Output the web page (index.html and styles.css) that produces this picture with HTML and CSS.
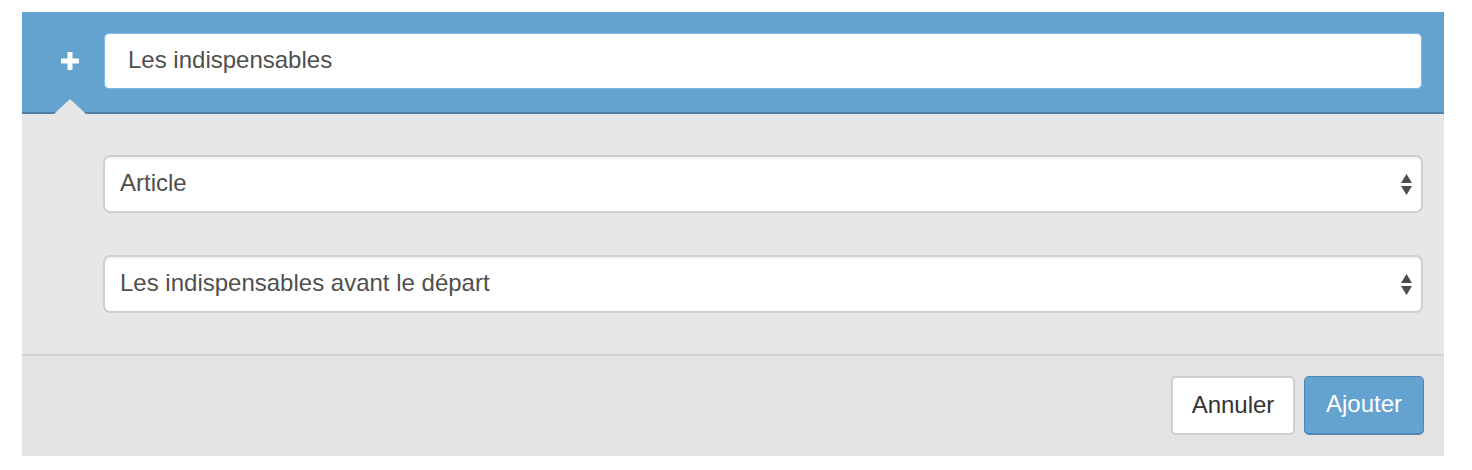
FILE: index.html
```html
<!DOCTYPE html>
<html lang="fr">
<head>
  <meta charset="UTF-8">
  <meta name="viewport" content="width=device-width, initial-scale=1.0">
  <title>Ajouter un lien</title>
  <link rel="stylesheet" href="styles.css">
</head>
<body>
  <main class="panel">
    <div class="panel-head">
      <div class="icon">
        <svg width="18" height="18" viewBox="0 0 18 18">
          <rect x="6.5" y="0" width="5" height="18" fill="#fff"/>
          <rect x="0" y="6.5" width="18" height="5" fill="#fff"/>
        </svg>
      </div>
      <input class="title-input" type="text" value="Les indispensables">
      <span class="pointer"></span>
    </div>

    <div class="panel-body">
      <div class="select">
        <span>Article</span>
        <svg class="caret" width="11" height="21" viewBox="0 0 11 21">
          <path d="M5.5 0 L11 9 L0 9 Z" fill="#4d4d4d"/>
          <path d="M0 12 L11 12 L5.5 21 Z" fill="#4d4d4d"/>
        </svg>
      </div>
      <div class="select">
        <span>Les indispensables avant le départ</span>
        <svg class="caret" width="11" height="21" viewBox="0 0 11 21">
          <path d="M5.5 0 L11 9 L0 9 Z" fill="#4d4d4d"/>
          <path d="M0 12 L11 12 L5.5 21 Z" fill="#4d4d4d"/>
        </svg>
      </div>
    </div>

    <div class="panel-foot">
      <button class="btn btn-default">Annuler</button>
      <button class="btn btn-primary">Ajouter</button>
    </div>
  </main>
</body>
</html>
```

FILE: styles.css
```css
* {
  margin: 0;
  padding: 0;
  box-sizing: border-box;
}
body {
  background-color: #fff;
  font-family: "Liberation Sans", Arial, sans-serif;
  font-size: 24px;
  color: #4f4f4f;
}
.panel {
  width: 1422px;
  margin: 12px 0 0 22px;
}

/* header */
.panel-head {
  position: relative;
  height: 102px;
  display: flex;
  align-items: center;
  padding: 0 22px 2px 20px;
  background-color: #64a2d0;
  border-bottom: 2px solid #4f7fa6;
}
.icon {
  width: 56px;
  height: 56px;
  display: flex;
  justify-content: center;
  align-items: center;
  margin-right: 6px;
}
.title-input {
  flex: 1;
  height: 56px;
  padding: 0 23px 2px;
  border: 1px solid #7fb4e0;
  border-radius: 5px;
  box-shadow: 0 0 3px rgba(102, 175, 233, 0.8);
  font-family: inherit;
  font-size: 24px;
  color: #4f4f4f;
  background-color: #fff;
  outline: none;
}
.pointer {
  position: absolute;
  left: 32px;
  bottom: -2px;
  width: 0;
  height: 0;
  border-left: 16px solid transparent;
  border-right: 16px solid transparent;
  border-bottom: 15px solid #e7e7e7;
}

/* body */
.panel-body {
  background-color: #e7e7e7;
  padding: 41px 21px 41px 81px;
  display: flex;
  flex-direction: column;
  gap: 42px;
  border-bottom: 2px solid #d2d2d2;
}
.select {
  height: 58px;
  display: flex;
  align-items: center;
  justify-content: space-between;
  padding: 0 9px 3px 15px;
  background-color: #fff;
  border: 2px solid #cfcfcf;
  border-radius: 7px;
  box-shadow: inset 0 2px 2px rgba(0, 0, 0, 0.05);
}
.caret {
  margin-top: 3px;
}

/* footer */
.panel-foot {
  background-color: #e3e3e3;
  height: 100px;
  display: flex;
  justify-content: flex-end;
  align-items: flex-start;
  gap: 9px;
  padding: 20px 20px 0 0;
}
.btn {
  height: 59px;
  padding-bottom: 2px;
  border-radius: 5px;
  font-family: inherit;
  font-size: 24px;
  cursor: pointer;
}
.btn-default {
  width: 124px;
  background-color: #fff;
  border: 2px solid #cfcfcf;
  color: #333;
}
.btn-primary {
  width: 120px;
  background-color: #64a2d0;
  border: 1px solid #4f86b4;
  border-bottom-width: 2px;
  color: #fff;
}
```
